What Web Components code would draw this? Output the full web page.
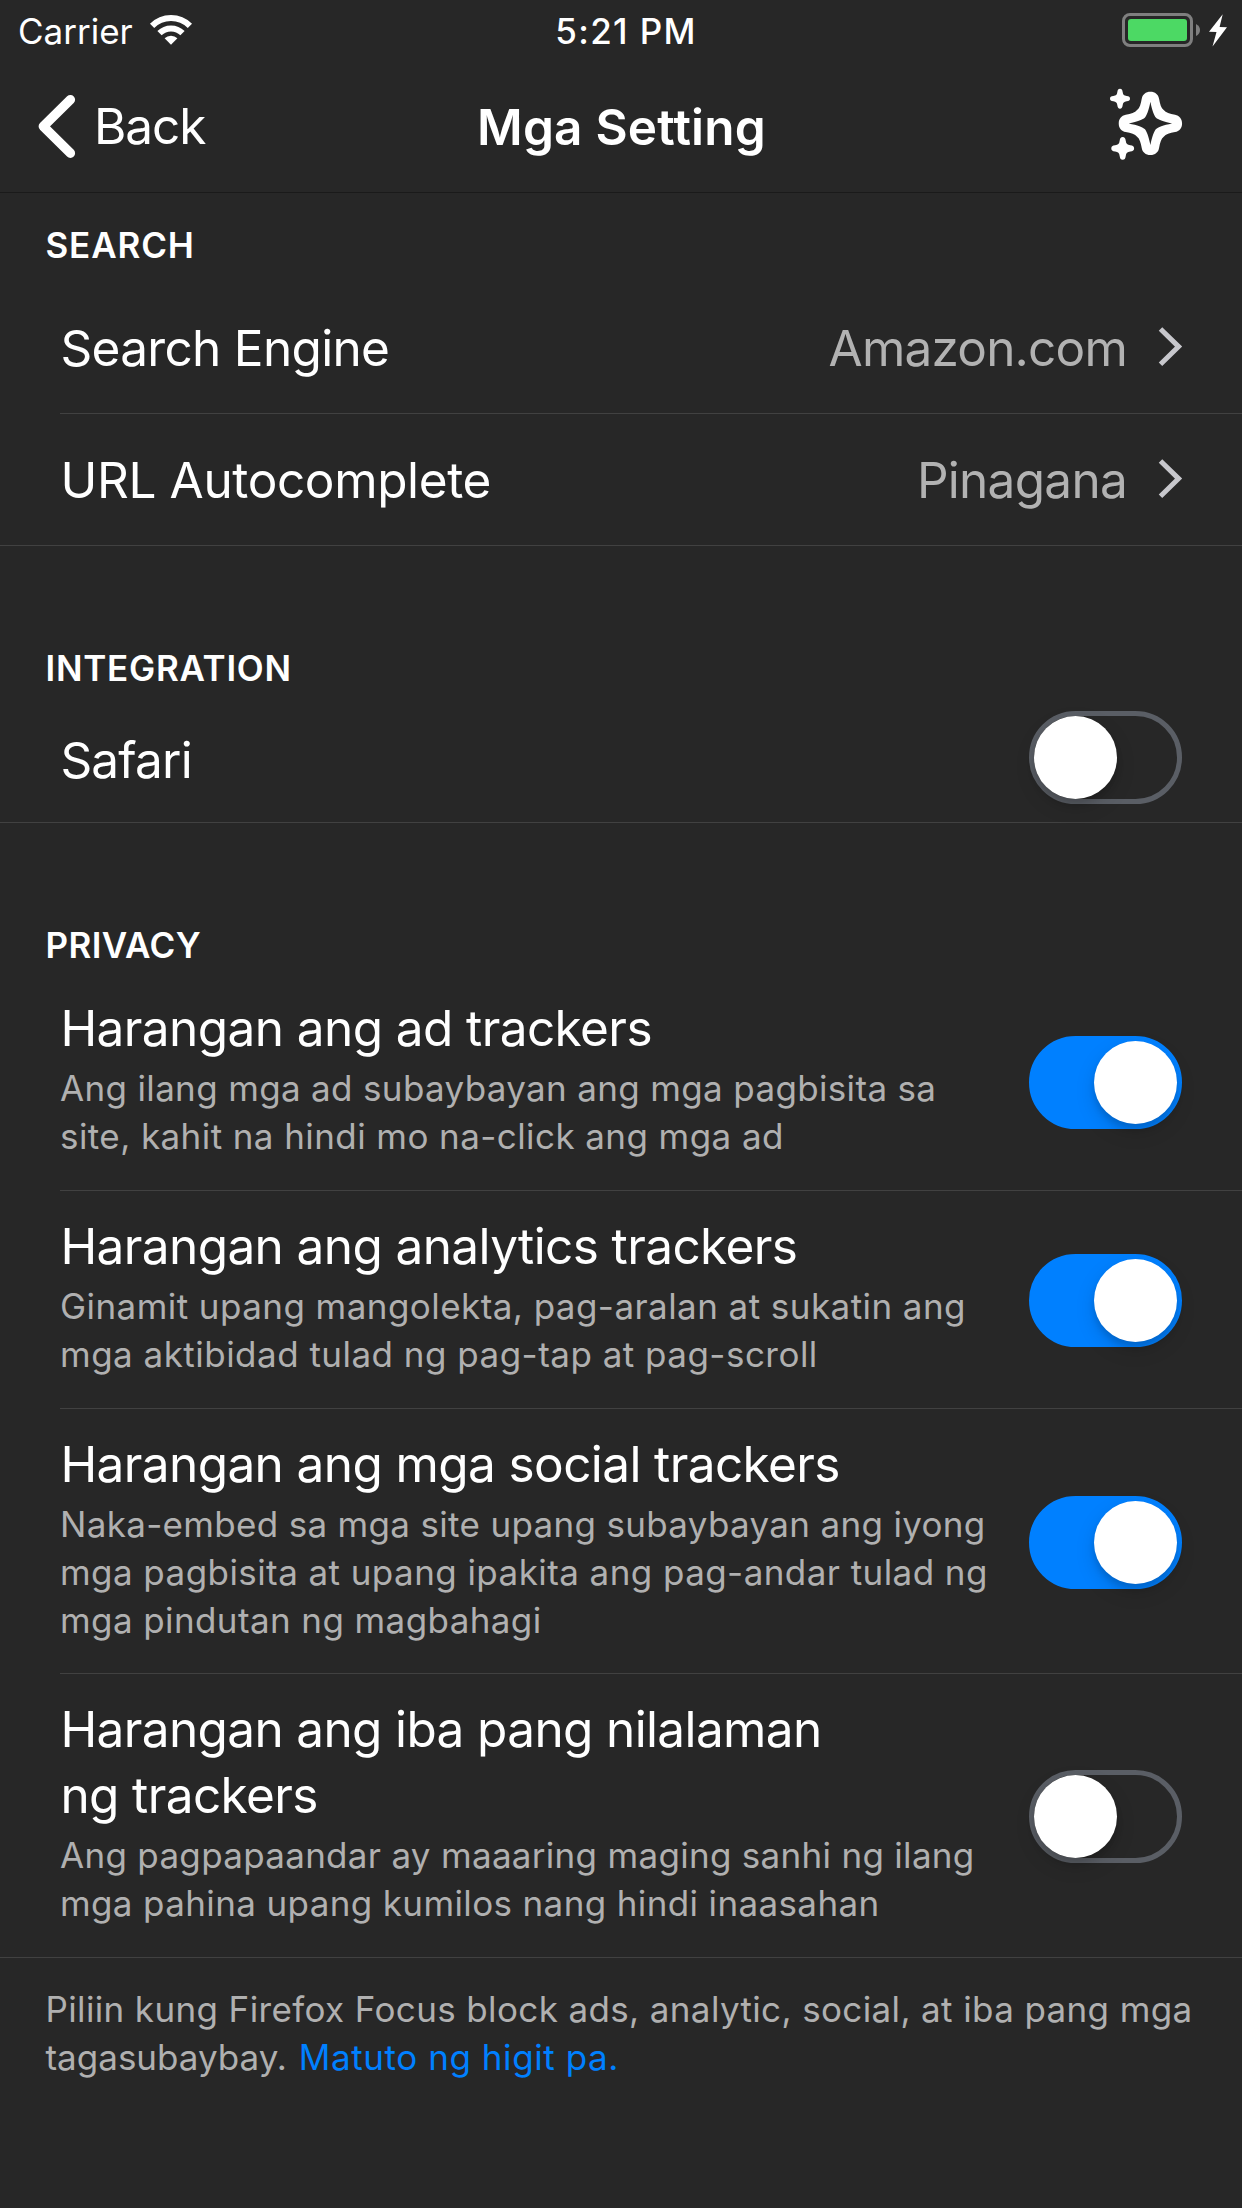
<!DOCTYPE html>
<html lang="tl">
<head>
<meta charset="utf-8">
<title>Mga Setting</title>
<style>
html, body { margin: 0; background: #272727; }
body { width: 1242px; height: 2208px; overflow: hidden; font-family: Inter, "Liberation Sans", sans-serif; color: #fff; }
.ln { display: block; white-space: nowrap; }
</style>
</head>
<body>
<settings-screen>
  <status-bar slot="top"></status-bar>
  <nav-bar slot="top"><span slot="back">Back</span>Mga Setting</nav-bar>

  <settings-section style="--pad:28px;--head:89px;--ls:.85px">
    <span slot="heading">SEARCH</span>
    <link-row><span style="letter-spacing:-.69px">Search Engine</span><span slot="value" style="letter-spacing:-.8px">Amazon.com</span></link-row>
    <link-row last><span style="letter-spacing:-.37px">URL Autocomplete</span><span slot="value" style="letter-spacing:-.72px">Pinagana</span></link-row>
  </settings-section>

  <settings-section style="--ls:.72px">
    <span slot="heading">INTEGRATION</span>
    <toggle-row last style="--h:132px;--top:36px;--sw:20px"><span style="letter-spacing:-.8px">Safari</span></toggle-row>
  </settings-section>

  <settings-section style="--head:150px;--ls:.4px">
    <span slot="heading">PRIVACY</span>
    <toggle-row on style="--h:218px;--sw:63px">
      <span style="letter-spacing:-.58px">Harangan ang ad trackers</span>
      <span slot="detail" class="ln" style="letter-spacing:.34px">Ang ilang mga ad subaybayan ang mga pagbisita sa</span>
      <span slot="detail" class="ln" style="letter-spacing:.42px">site, kahit na hindi mo na-click ang mga ad</span>
    </toggle-row>
    <toggle-row on style="--h:218px;--sw:63px">
      <span style="letter-spacing:-.6px">Harangan ang analytics trackers</span>
      <span slot="detail" class="ln" style="letter-spacing:.44px">Ginamit upang mangolekta, pag-aralan at sukatin ang</span>
      <span slot="detail" class="ln" style="letter-spacing:.48px">mga aktibidad tulad ng pag-tap at pag-scroll</span>
    </toggle-row>
    <toggle-row on style="--h:265px;--sw:87px">
      <span style="letter-spacing:-.6px">Harangan ang mga social trackers</span>
      <span slot="detail" class="ln" style="letter-spacing:.32px">Naka-embed sa mga site upang subaybayan ang iyong</span>
      <span slot="detail" class="ln" style="letter-spacing:.43px">mga pagbisita at upang ipakita ang pag-andar tulad ng</span>
      <span slot="detail" class="ln" style="letter-spacing:.4px">mga pindutan ng magbahagi</span>
    </toggle-row>
    <toggle-row last style="--h:284px;--sw:96px">
      <span class="ln" style="letter-spacing:-.63px">Harangan ang iba pang nilalaman</span>
      <span class="ln" style="letter-spacing:-.6px">ng trackers</span>
      <span slot="detail" class="ln" style="letter-spacing:.3px">Ang pagpapaandar ay maaaring maging sanhi ng ilang</span>
      <span slot="detail" class="ln" style="letter-spacing:.37px">mga pahina upang kumilos nang hindi inaasahan</span>
    </toggle-row>
  </settings-section>

  <section-note>
    <span class="ln" style="letter-spacing:.37px">Piliin kung Firefox Focus block ads, analytic, social, at iba pang mga</span>
    <span class="ln">tagasubaybay. <span style="color:#0080ff;letter-spacing:.57px;margin-left:2px">Matuto ng higit pa.</span></span>
  </section-note>
</settings-screen>

<script>
const define = (name, html) => {
  const tpl = document.createElement('template');
  tpl.innerHTML = html;
  customElements.define(name, class extends HTMLElement {
    constructor() {
      super();
      this.attachShadow({ mode: 'open' }).append(tpl.content.cloneNode(true));
    }
  });
};

define('settings-screen', `
<style>
:host { display: flex; flex-direction: column; width: 1242px; height: 2208px; background: #272727; }
</style>
<slot name="top"></slot><slot></slot>`);

define('status-bar', `
<style>
:host { display: grid; grid-template-columns: 1fr auto 1fr; height: 60px; font-size: 35px; line-height: 48px; box-sizing: border-box; padding: 7px 15px 0 18px; }
.left { display: flex; gap: 16px; }
.time { font-weight: 500; letter-spacing: 1.35px; padding-left: 7px; }
.right { display: flex; justify-content: flex-end; }
svg { display: block; }
.left svg { margin-top: 6px; }
.right svg { margin-top: 4px; }
</style>
<div class="left"><span>Carrier</span>
<svg width="44" height="34" viewBox="149 13 44 34" fill="none" stroke="#fff" stroke-width="6">
<path d="M152.1 25.8A26.7 26.7 0 0 1 189.9 25.8"/><path d="M159.5 33.2A16.3 16.3 0 0 1 182.5 33.2"/>
<path d="M171 44.8L164.6 38.3A9 9 0 0 1 177.4 38.3Z" fill="#fff" stroke="none"/></svg></div>
<span class="time">5:21 PM</span>
<div class="right"><svg width="106" height="38" viewBox="1121 11 106 38">
<rect x="1123.5" y="14.5" width="68" height="31" rx="6.5" fill="none" stroke="#7f7f7f" stroke-width="3"/>
<rect x="1128" y="19" width="59" height="22" rx="3" fill="#4cd964"/>
<path d="M1196 24Q1200 26 1200 30T1196 36Z" fill="#7f7f7f"/>
<path d="M1222.7 14.3L1209 31.7L1216.5 32L1212.5 46.4L1227 27.3L1219.6 27Z" fill="#fff"/></svg></div>`);

define('nav-bar', `
<style>
:host { display: grid; grid-template-columns: 1fr auto 1fr; height: 133px; box-sizing: border-box; border-bottom: 1px solid #1a1a1a; font-size: 49.5px; line-height: 66px; padding: 0 58px 0 36px; }
.back { display: flex; gap: 17px; letter-spacing: -1.1px; padding-top: 33px; }
.title { font-weight: 600; letter-spacing: .2px; padding: 34px 0 0 23px; }
.action { display: flex; justify-content: flex-end; padding-top: 26px; }
svg { display: block; }
</style>
<div class="back"><svg width="41" height="66" viewBox="36 93 41 66" fill="none" stroke="#fff" stroke-width="9.4" stroke-linecap="round" stroke-linejoin="round"><path d="M70.4 99.7L43.3 126.3L70.4 153.2"/></svg><slot name="back"></slot></div>
<div class="title"><slot></slot></div>
<div class="action"><svg width="76" height="76" viewBox="1108 86 76 76" fill="#fff">
<defs><path id="s" d="M0-30C5-30 7-27 8-20C9-12 12-9 20-8C27-7 30-5 30 0C30 5 27 7 20 8C12 9 9 12 8 20C7 27 5 30 0 30C-5 30-7 27-8 20C-9 12-12 9-20 8C-27 7-30 5-30 0C-30-5-27-7-20-8C-12-9-9-12-8-20C-7-27-5-30 0-30Z"/></defs>
<path fill-rule="evenodd" transform="translate(1150.4 123.4) scale(.3333)" d="M0-95C14-95 24-87 26-74C29-58 32-46 40-40C46-32 58-29 74-26C87-23 95-14 95 0C95 14 87 23 74 26C58 29 46 32 40 40C32 46 29 58 26 74C24 87 14 95 0 95C-14 95-24 87-26 74C-29 58-32 46-40 40C-46 32-58 29-74 26C-87 23-95 14-95 0C-95-14-87-23-74-26C-58-29-46-32-40-40C-32-46-29-58-26-74C-24-87-14-95 0-95ZM0-65C-5-38-12-22-17-17C-22-12-38-5-65 0C-38 5-22 12-17 17C-12 22-5 38 0 65C5 38 12 22 17 17C22 12 38 5 65 0C38-5 22-12 17-17C12-22 5-38 0-65Z"/>
<use href="#s" transform="translate(1120 98.7) scale(.3333)"/><use href="#s" transform="translate(1122.7 148.4) scale(.38)"/></svg></div>`);

define('settings-section', `
<style>
:host { display: flex; flex-direction: column; }
.head { box-sizing: border-box; height: var(--head, 145px); padding: var(--pad, 98px) 0 0 45.5px; font-size: 35px; font-weight: 600; line-height: 48px; letter-spacing: var(--ls); }
</style>
<div class="head"><slot name="heading"></slot></div><slot></slot>`);

define('link-row', `
<style>
:host { display: flex; box-sizing: border-box; height: 132px; margin-left: 60px; border-bottom: 1px solid #414141; padding: 33px 58px 0 0; font-size: 49.5px; line-height: 66px; }
:host([last]) { margin-left: 0; padding-left: 60px; }
.label { flex: 1; padding-left: .5px; }
.value { color: #b2b2b2; margin-right: 29px; }
svg { display: block; margin-top: 10px; }
</style>
<span class="label"><slot></slot></span><span class="value"><slot name="value"></slot></span>
<svg width="28" height="44" viewBox="1156 325 28 44" fill="none" stroke="#c7c7cc" stroke-width="5"><path d="M1160.5 329L1178.6 346.6L1160.5 364.2"/></svg>`);

define('toggle-row', `
<style>
:host { display: flex; justify-content: space-between; align-items: flex-start; box-sizing: border-box; height: var(--h); margin-left: 60px; border-bottom: 1px solid #414141; padding-right: 60px; }
:host([last]) { margin-left: 0; padding-left: 60px; }
.text { padding-top: var(--top, 22px); }
.title { font-size: 49.5px; line-height: 66px; margin-left: .4px; }
.detail { margin-top: 3px; font-size: 35px; line-height: 48px; color: #b0b0b0; }
.switch { display: flex; box-sizing: border-box; width: 153px; height: 93px; margin-top: var(--sw); border-radius: 47px; border: 5px solid #5a5e65; flex: none; }
.knob { width: 83px; height: 83px; border-radius: 50%; background: #fff; box-shadow: 0 8px 20px rgba(0,0,0,.13), 0 5px 6px rgba(0,0,0,.12); }
:host([on]) .switch { justify-content: flex-end; background: #0080ff; border-color: #0080ff; }
:host(:not([on])) .knob { margin-left: -.5px; }
</style>
<div class="text"><div class="title"><slot></slot></div><div class="detail"><slot name="detail"></slot></div></div>
<div class="switch"><div class="knob"></div></div>`);

define('section-note', `
<style>
:host { display: block; padding: 27px 0 0 45.5px; font-size: 35px; line-height: 48px; color: #b0b0b0; }
</style>
<slot></slot>`);
</script>
</body>
</html>
